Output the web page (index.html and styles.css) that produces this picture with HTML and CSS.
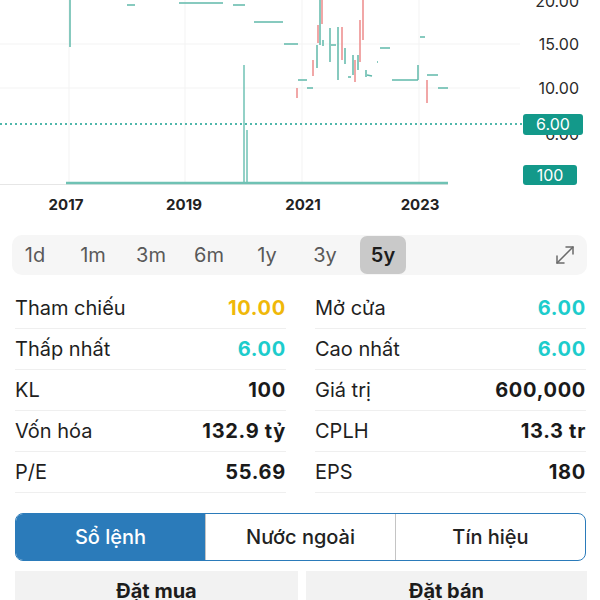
FILE: index.html
```html
<!DOCTYPE html>
<html lang="vi">
<head>
    <meta charset="UTF-8">
    <meta name="viewport" content="width=device-width, initial-scale=1.0">
    <title>Chi tiết cổ phiếu</title>
    <link rel="stylesheet" href="styles.css">
</head>
<body>
    <div class="chart">
        <svg class="chart-svg" width="600" height="220" viewBox="0 0 600 220">
            <!-- grid -->
            <g stroke="#f3f3f3" stroke-width="1">
                <line x1="69" y1="0" x2="69" y2="184"/>
                <line x1="185" y1="0" x2="185" y2="184"/>
                <line x1="302" y1="0" x2="302" y2="184"/>
                <line x1="419" y1="0" x2="419" y2="184"/>
                <line x1="0" y1="44" x2="520" y2="44"/>
                <line x1="0" y1="88" x2="520" y2="88"/>
            </g>
            <line x1="0" y1="184.5" x2="448" y2="184.5" stroke="#e6e6e6"/>

            <!-- price segments -->
            <g stroke="#5fb8aa" stroke-width="1.5" fill="none">
                <line x1="70" y1="0" x2="70" y2="47"/>
                <line x1="127" y1="5" x2="135" y2="5"/>
                <line x1="179" y1="3" x2="223" y2="3"/>
                <line x1="233" y1="5" x2="245" y2="5"/>
                <line x1="254" y1="22" x2="283" y2="22"/>
                <line x1="284" y1="44" x2="298" y2="44"/>
                <line x1="298" y1="80" x2="307" y2="80"/>
                <line x1="307" y1="88" x2="313" y2="88"/>
                <line x1="317" y1="45" x2="317" y2="68"/>
                <line x1="320" y1="0" x2="320" y2="45"/>
                <line x1="323" y1="40" x2="323" y2="46"/>
                <line x1="330" y1="28" x2="330" y2="62"/>
                <line x1="331" y1="45" x2="336" y2="45"/>
                <line x1="338" y1="27" x2="338" y2="80"/>
                <line x1="345" y1="48" x2="345" y2="64"/>
                <line x1="348" y1="77" x2="351" y2="77"/>
                <line x1="353" y1="55" x2="353" y2="75"/>
                <line x1="358" y1="55" x2="358" y2="70"/>
                <line x1="366" y1="70" x2="366" y2="77"/>
                <line x1="367" y1="75" x2="372" y2="76"/>
                <line x1="377" y1="62" x2="378" y2="62"/>
                <line x1="380" y1="48" x2="390" y2="48"/>
                <line x1="392" y1="80" x2="418" y2="80"/>
                <line x1="418" y1="65" x2="418" y2="80"/>
                <line x1="420" y1="37" x2="425" y2="37"/>
                <line x1="427" y1="75" x2="438" y2="75"/>
                <line x1="438" y1="88" x2="448" y2="88"/>
            </g>
            <g stroke="#ec8a8a" stroke-width="1.5" fill="none">
                <line x1="297" y1="88" x2="297" y2="98"/>
                <line x1="313" y1="60" x2="313" y2="76"/>
                <line x1="318" y1="25" x2="318" y2="43"/>
                <line x1="322" y1="0" x2="322" y2="24"/>
                <line x1="342" y1="27" x2="342" y2="60"/>
                <line x1="355" y1="60" x2="355" y2="82"/>
                <line x1="360" y1="20" x2="360" y2="62"/>
                <line x1="363" y1="0" x2="363" y2="40"/>
                <line x1="427" y1="80" x2="427" y2="103"/>
            </g>

            <!-- volume -->
            <g stroke="#6fc2b4" fill="none">
                <line x1="244" y1="65" x2="244" y2="184" stroke-width="1.5"/>
                <line x1="247" y1="130" x2="247" y2="184" stroke-width="1.5"/>
                <line x1="66" y1="183" x2="448" y2="183" stroke-width="2.5"/>
            </g>

            <!-- last price -->
            <line x1="0" y1="124" x2="523" y2="124" stroke="#17a090" stroke-width="1.5" stroke-dasharray="2 3"/>

            <!-- axis labels -->
            <text class="axis" x="579" y="7" text-anchor="end">20.00</text>
            <text class="axis" x="579" y="50" text-anchor="end">15.00</text>
            <text class="axis" x="579" y="94" text-anchor="end">10.00</text>
            <text class="axis" x="579" y="140" text-anchor="end">6.00</text>

            <rect x="523" y="114" width="60" height="21" rx="3" fill="#13998a"/>
            <text class="badge" x="553" y="130" text-anchor="middle">6.00</text>
            <rect x="523" y="165" width="54" height="20" rx="3" fill="#13998a"/>
            <text class="badge" x="550" y="181" text-anchor="middle">100</text>

            <text class="year" x="66" y="210" text-anchor="middle">2017</text>
            <text class="year" x="184" y="210" text-anchor="middle">2019</text>
            <text class="year" x="303" y="210" text-anchor="middle">2021</text>
            <text class="year" x="420" y="210" text-anchor="middle">2023</text>
        </svg>
    </div>

    <div class="periods">
        <div class="period">1d</div>
        <div class="period">1m</div>
        <div class="period">3m</div>
        <div class="period">6m</div>
        <div class="period">1y</div>
        <div class="period">3y</div>
        <div class="period active">5y</div>
        <div class="expand">
            <svg width="20" height="20" viewBox="0 0 20 20" fill="none" stroke="#6b6b6b" stroke-width="1.5" stroke-linecap="round" stroke-linejoin="round">
                <path d="M2 18 L18 2"/>
                <path d="M11 2 H18 V9"/>
                <path d="M2 11 V18 H9"/>
            </svg>
        </div>
    </div>

    <div class="stats">
        <div class="stat"><span class="label">Tham chiếu</span><span class="value ref">10.00</span></div>
        <div class="stat"><span class="label">Mở cửa</span><span class="value up">6.00</span></div>
        <div class="stat"><span class="label">Thấp nhất</span><span class="value up">6.00</span></div>
        <div class="stat"><span class="label">Cao nhất</span><span class="value up">6.00</span></div>
        <div class="stat"><span class="label">KL</span><span class="value">100</span></div>
        <div class="stat"><span class="label">Giá trị</span><span class="value">600,000</span></div>
        <div class="stat"><span class="label">Vốn hóa</span><span class="value">132.9 tỷ</span></div>
        <div class="stat"><span class="label">CPLH</span><span class="value">13.3 tr</span></div>
        <div class="stat"><span class="label">P/E</span><span class="value">55.69</span></div>
        <div class="stat"><span class="label">EPS</span><span class="value">180</span></div>
    </div>

    <div class="tabs">
        <div class="tab active">Sổ lệnh</div>
        <div class="tab">Nước ngoài</div>
        <div class="tab">Tín hiệu</div>
    </div>

    <div class="orders">
        <div class="order-head">Đặt mua</div>
        <div class="order-head">Đặt bán</div>
    </div>
</body>
</html>
```

FILE: styles.css
```css
body {
    margin: 0;
    font-family: Inter, "Noto Sans", sans-serif;
    background: #fff;
    color: #1f1f1f;
    width: 600px;
    overflow: hidden;
}

.chart-svg {
    display: block;
}

.axis {
    font-family: Inter, sans-serif;
    font-size: 16px;
    fill: #2b2b2b;
}

.badge {
    font-family: Inter, sans-serif;
    font-size: 16px;
    fill: #fff;
}

.year {
    font-family: Inter, sans-serif;
    font-size: 15px;
    font-weight: 700;
    fill: #222;
}

.periods {
    display: flex;
    align-items: center;
    gap: 12px;
    margin: 15px 13px 0 12px;
    height: 40px;
    background: #f6f6f6;
    border-radius: 10px;
}

.period {
    width: 46px;
    height: 38px;
    display: flex;
    align-items: center;
    justify-content: center;
    font-size: 20px;
    color: #595959;
    border-radius: 7px;
}

.period.active {
    background: #c9c9c9;
    color: #1c1c1c;
    font-weight: 600;
}

.expand {
    margin-left: auto;
    margin-right: 12px;
    display: flex;
}

.stats {
    display: grid;
    grid-template-columns: 271px 271px;
    column-gap: 29px;
    margin: 13px 14px 0 15px;
}

.stat {
    display: flex;
    justify-content: space-between;
    align-items: center;
    height: 40px;
    border-bottom: 1px solid #efefef;
    font-size: 20px;
}

.label {
    color: #1f1f1f;
}

.value {
    font-weight: 700;
    color: #1a1a1a;
    letter-spacing: 0.7px;
}

.value.ref {
    color: #efb809;
}

.value.up {
    color: #1dcccc;
}

.tabs {
    display: flex;
    margin: 20px 14px 0 15px;
    height: 46px;
    border: 1.5px solid #2b7bba;
    border-radius: 8px;
    overflow: hidden;
}

.tab {
    flex: 1;
    display: flex;
    align-items: center;
    justify-content: center;
    font-size: 20px;
    font-weight: 500;
    color: #222;
    border-left: 1px solid #c4c4c4;
}

.tab:first-child {
    border-left: none;
}

.tab.active {
    background: #2b7bba;
    color: #fff;
}

.orders {
    display: grid;
    grid-template-columns: 283px 281px;
    column-gap: 8px;
    margin: 10px 14px 0 15px;
}

.order-head {
    background: #f2f2f2;
    height: 40px;
    display: flex;
    justify-content: center;
    padding-top: 8px;
    box-sizing: border-box;
    font-size: 20px;
    font-weight: 700;
    color: #1c1c1c;
}
```
